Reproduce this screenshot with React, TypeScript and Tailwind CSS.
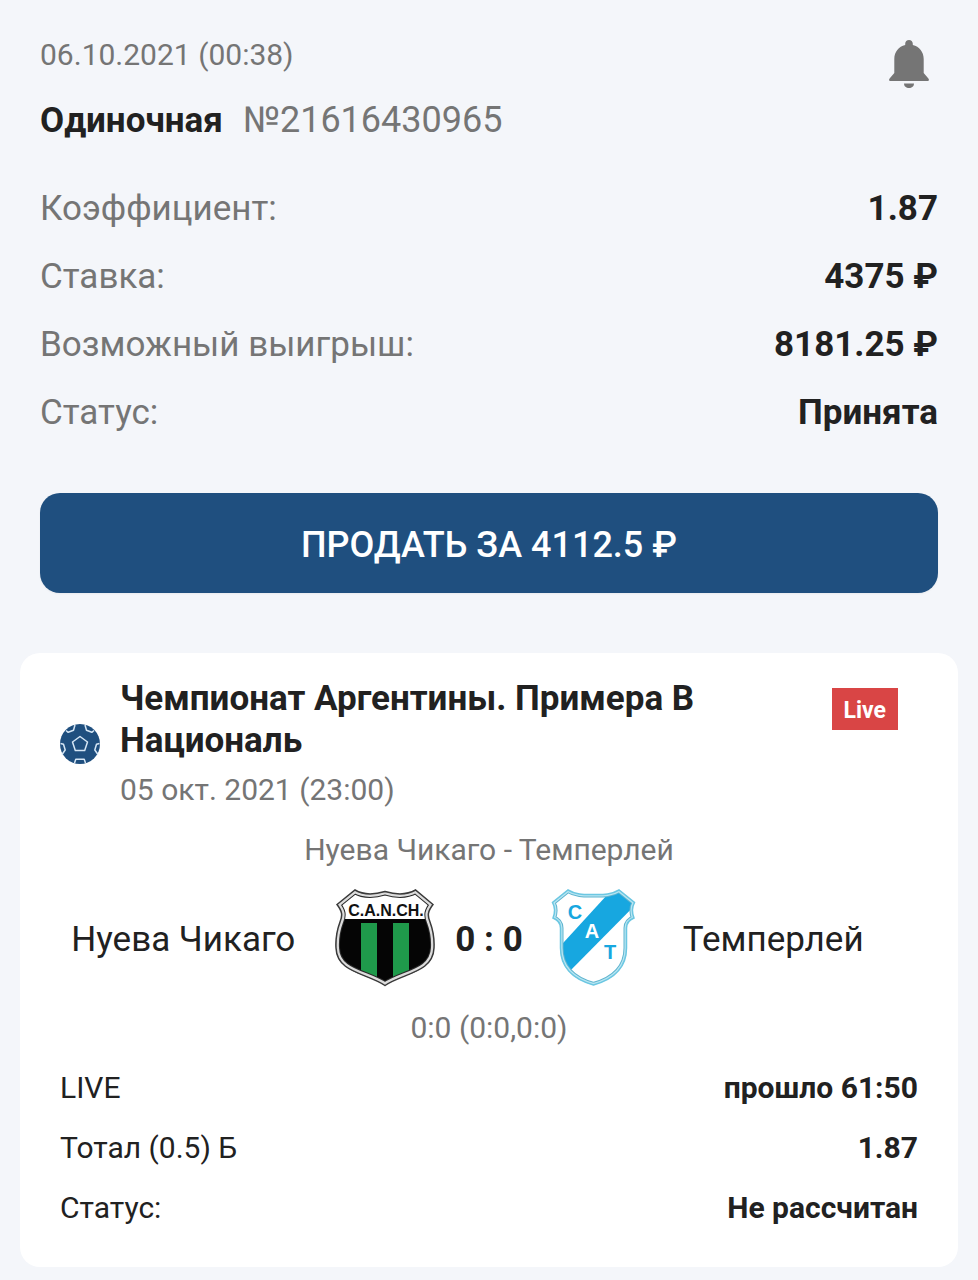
interface Row {
  label: string
  value: string
}

const betRows: Row[] = [
  { label: 'Коэффициент:', value: '1.87' },
  { label: 'Ставка:', value: '4375 ₽' },
  { label: 'Возможный выигрыш:', value: '8181.25 ₽' },
  { label: 'Статус:', value: 'Принята' },
]

const eventRows: Row[] = [
  { label: 'LIVE', value: 'прошло 61:50' },
  { label: 'Тотал (0.5) Б', value: '1.87' },
  { label: 'Статус:', value: 'Не рассчитан' },
]

function BellIcon() {
  return (
    <svg width="40" height="48" viewBox="0 0 40 48" fill="#757575" aria-hidden="true">
      <path d="M20 0c-2.200 0-3.800 1.600-3.800 3.700v1.300C9.700 6.500 5.300 12 5.300 19v14L.6 38.500C-.4 39.700.1 41 1.500 41h37c1.400 0 1.900-1.300.9-2.500L34.700 33V19c0-7-4.400-12.500-10.900-14V3.700C23.800 1.600 22.200 0 20 0z" />
      <path d="M15 43.500h10c0 2.800-2.200 4.500-5 4.500s-5-1.700-5-4.500z" />
    </svg>
  )
}

function BallIcon() {
  return (
    <svg width="40" height="40" viewBox="0 0 40 40" className="shrink-0" aria-hidden="true">
      <circle cx="20" cy="20" r="20" fill="#1f4f7f" />
      <g fill="none" stroke="#d5e6f5" strokeWidth="1.500" strokeLinejoin="round">
        <path d="M20 12.500l7.500 5.500-2.800 8.500h-9.400L12.500 18z" />
        <path d="M14.500 39l1.300-3.700h8.400l1.300 3.700" />
        <path d="M6 6.500l2.200 1.800 5.300-2L15 1" />
        <path d="M34 6.500l-2.200 1.800-5.300-2L25 1" />
        <path d="M.5 19.500l3 .8L5.200 26 2 30.500" />
        <path d="M39.500 19.500l-3 .8-1.700 5.700 3.200 4.500" />
      </g>
    </svg>
  )
}

const chicagoShield =
  'M20 2C29 7.500 40 6.500 50 3.500C60 6.500 71 7.500 80.500 2L98 16.500C93 23 92 27 95 34C98 42 99.500 50 99 60C98 85 68 85 50 97.500C32 85 2 85 1 60C.5 50 2 42 5 34C8 27 7 23 2 16.500Z'

function ChicagoLogo() {
  return (
    <svg width="100" height="100" viewBox="0 0 100 100" className="shrink-0" role="img" aria-label="Нуева Чикаго">
      <defs>
        <clipPath id="chicago-shield">
          <path d={chicagoShield} />
        </clipPath>
      </defs>
      <g clipPath="url(#chicago-shield)">
        <rect width="100" height="100" fill="#fff" />
        <rect y="31" width="100" height="69" fill="#050505" />
        <rect x="26" y="35" width="16" height="54" fill="#1f9a4b" />
        <rect x="58" y="35" width="16" height="54" fill="#1f9a4b" />
        <path d={chicagoShield} fill="none" stroke="#2a2a2a" strokeWidth="8" />
        <path d={chicagoShield} fill="none" stroke="#dcdcdc" strokeWidth="6" />
      </g>
      <path d={chicagoShield} fill="none" stroke="#3a3a3a" strokeWidth="1.500" />
      <text x="51" y="28" textAnchor="middle" fontSize="16" fontWeight="700" fill="#111" className="font-['Liberation_Sans',sans-serif]">
        C.A.N.CH.
      </text>
    </svg>
  )
}

const temperleyShield =
  'M25 2C33 7 42 6.500 50.500 6.500C59 6.500 68 7 76 2L91.500 14.500C88.500 20 89 25 91 30C86 32 83.500 35 83.500 40V60C83.500 82 68 92 50.500 97C33 92 17.500 82 17.500 60V40C17.500 35 15 32 10 30C12 25 12.500 20 9.500 14.500Z'

function TemperleyLogo() {
  return (
    <svg width="100" height="100" viewBox="0 0 100 100" className="shrink-0" role="img" aria-label="Темперлей">
      <defs>
        <clipPath id="temperley-shield">
          <path d={temperleyShield} />
        </clipPath>
      </defs>
      <g clipPath="url(#temperley-shield)">
        <rect width="100" height="100" fill="#fff" />
        <path d="M75-5L10 66 22 88 102 7z" fill="#17a7e0" />
        <path d={temperleyShield} fill="none" stroke="#5fb4cf" strokeWidth="6" />
        <path d={temperleyShield} fill="none" stroke="#b9e6f2" strokeWidth="4" />
      </g>
      <path d={temperleyShield} fill="none" stroke="#6cc7e2" strokeWidth="1.500" />
      <g fontSize="20" fontWeight="700" textAnchor="middle" className="font-['Liberation_Sans',sans-serif]">
        <text x="32" y="31" fill="#17a7e0">C</text>
        <text x="49" y="50" fill="#fff">A</text>
        <text x="67" y="71" fill="#17a7e0">T</text>
      </g>
    </svg>
  )
}

export default function App() {
  return (
    <main className="min-h-screen bg-[#f4f6fa] px-5 pt-[35px] pb-[14px] font-[Roboto,sans-serif] text-[#212121]">
      <section className="px-5">
        <div className="flex items-start justify-between">
          <div>
            <p className="text-[30px] leading-10 text-[#757575]">06.10.2021 (00:38)</p>
            <h1 className="mt-[21px] flex flex-wrap items-baseline gap-x-5 text-[35px] leading-12">
              <span className="font-bold">Одиночная</span>
              <span className="text-4xl leading-12 text-[#757575]">№21616430965</span>
            </h1>
          </div>
          <button type="button" aria-label="Уведомления" className="mt-[5px] mr-[9px]">
            <BellIcon />
          </button>
        </div>

        <dl className="mt-[30px]">
          {betRows.map(row => (
            <div key={row.label} className="flex items-center justify-between text-[35px] leading-[68px]">
              <dt className="text-[#757575]">{row.label}</dt>
              <dd className="font-bold">{row.value}</dd>
            </div>
          ))}
        </dl>

        <button
          type="button"
          className="mt-[46px] h-[100px] w-full rounded-[20px] bg-[#1f4f7f] pt-1 text-4xl font-medium text-white shadow-xs"
        >
          ПРОДАТЬ ЗА 4112.5 ₽
        </button>
      </section>

      <section className="mt-[60px] rounded-[20px] bg-white px-10 pt-[25px] pb-[29px]">
        <div className="flex items-center gap-5">
          <BallIcon />
          <div className="flex-1">
            <div className="flex items-start justify-between gap-5">
              <h2 className="max-w-[640px] text-[35px] leading-[42px] font-bold">
                Чемпионат Аргентины. Примера В Националь
              </h2>
              <span className="mt-[10px] mr-5 bg-[#d94545] px-3 pt-1 text-[23px] leading-[38px] font-bold text-white">
                Live
              </span>
            </div>
            <p className="mt-2 text-[30px] leading-10 text-[#757575]">05 окт. 2021 (23:00)</p>
          </div>
        </div>

        <p className="mt-5 text-center text-[30px] leading-10 text-[#757575]">Нуева Чикаго - Темперлей</p>

        <div className="mt-[18px] flex items-center text-[35px] leading-12">
          <span className="flex-1 pt-1 pr-10 text-right">Нуева Чикаго</span>
          <ChicagoLogo />
          <span className="px-5 pt-1 font-bold">0 : 0</span>
          <TemperleyLogo />
          <span className="flex-1 pt-1 pl-10">Темперлей</span>
        </div>

        <p className="mt-5 text-center text-[30px] leading-10 text-[#757575]">0:0 (0:0,0:0)</p>

        <dl className="mt-[10px]">
          {eventRows.map(row => (
            <div key={row.label} className="flex items-center justify-between text-[30px] leading-[60px]">
              <dt>{row.label}</dt>
              <dd className="font-bold">{row.value}</dd>
            </div>
          ))}
        </dl>
      </section>
    </main>
  )
}
